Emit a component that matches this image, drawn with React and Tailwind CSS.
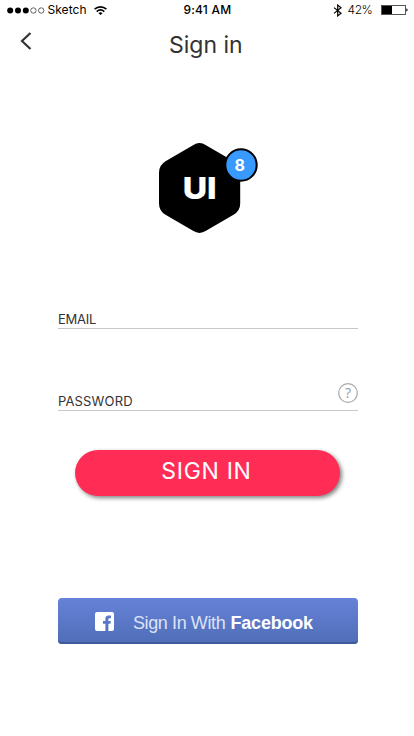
function StatusBar() {
  return (
    <header className="flex h-5 items-center text-[12px] leading-5 text-black">
      <svg className="ml-[7px] w-[38px] shrink-0" height="7" viewBox="0 0 38 7">
        <circle cx="3.2" cy="3.5" r="3" />
        <circle cx="11" cy="3.5" r="3" />
        <circle cx="18.8" cy="3.5" r="3" />
        <circle cx="26.4" cy="3.5" r="2.7" fill="none" stroke="#000" strokeWidth=".6" />
        <circle cx="34.2" cy="3.5" r="2.7" fill="none" stroke="#000" strokeWidth=".6" />
      </svg>
      <span className="ml-[2.5px] w-[40px] whitespace-nowrap tracking-[0.05px]">Sketch</span>
      <svg className="ml-[6px] shrink-0" width="13" height="9" viewBox="0 0 13 9" fill="none" stroke="#000" strokeWidth="1.6">
        <path d="M.6 3.2C4 .1 9 .1 12.400 3.200" />
        <path d="M2.700 5.600C5 3.600 8 3.600 10.300 5.600" />
        <path d="M4.500 7.200Q6.500 5.500 8.500 7.200L6.500 9Z" fill="#000" stroke="none" />
      </svg>
      <span className="ml-[77px] w-[50px] whitespace-nowrap font-medium tracking-[0.2px]">9:41 AM</span>
      <svg className="ml-[99px] shrink-0" width="10" height="13" viewBox="0 0 10 13" fill="none" stroke="#000" strokeWidth="1.2">
        <path d="M1 3.600 8 9.200 4.700 11.900V1.100L8 3.800 1 9.400" />
      </svg>
      <span className="ml-[5px] w-[26px] whitespace-nowrap font-[350] tracking-[-0.4px]">42%</span>
      <svg className="ml-[7px] shrink-0" width="28" height="10" viewBox="0 0 28 10">
        <rect x=".5" y=".5" width="24" height="9" fill="#fff" stroke="#444" strokeWidth=".9" />
        <rect x="1" y="1" width="10" height="8" />
        <path d="M25.300 3.300Q28 5 25.300 6.700Z" />
      </svg>
    </header>
  );
}

function Logo() {
  return (
    <svg className="ml-[158px] mt-[76px] block" width="100" height="92" viewBox="158 142 100 92">
      <path d="M193 145.200Q199.500 141 206 145.200L233.500 161.200Q240.200 165.200 240.200 172.500V203.500Q240.200 210.800 233.500 214.800L206 230.800Q199.500 235 193 230.800L165.500 214.800Q159 210.800 159 203.500V172.500Q159 165.200 165.500 161.200Z" />
      <circle cx="241" cy="165" r="15.700" fill="#3899ff" stroke="#000" strokeWidth="2" />
      <text x="182.700" y="199" fontFamily="Inter" fontWeight="840" fontSize="30.500" textLength="34" lengthAdjust="spacingAndGlyphs" fill="#fff" stroke="#fff" strokeWidth=".2">UI</text>
      <text x="239.700" y="170.600" textAnchor="middle" fontFamily="Inter" fontWeight="700" fontSize="16" fill="#fff">8</text>
    </svg>
  );
}

export default function App() {
  return (
    <main className="h-[736px] w-[414px] overflow-hidden bg-white font-['Inter',sans-serif] text-[#333]">
      <StatusBar />
      <div className="flex h-[46px] items-center">
        <svg className="ml-[20px] mb-[4px] shrink-0" width="12" height="18" viewBox="0 0 12 18" fill="none" stroke="#333" strokeWidth="2.200">
          <path d="M10.500 1 2 9l8.500 8" />
        </svg>
        <h1 className="ml-[137px] mt-[4px] whitespace-nowrap text-[23px] font-[370] leading-7">Sign in</h1>
      </div>
      <Logo />
      <form className="ml-[58px] w-[300px]">
        <div className="mt-[76px] h-[19px] border-b border-[#c8c8c8] text-[13px] leading-[18px] tracking-[-0.25px]">
          <label className="block">EMAIL</label>
        </div>
        <div className="mt-[50px] flex h-[32px] justify-between border-b border-[#c8c8c8]">
          <label className="mt-[13px] text-[13px] leading-[18px] tracking-[0.15px]">PASSWORD</label>
          <svg className="mt-[4px]" width="20" height="20" viewBox="0 0 20 20">
            <circle cx="10" cy="10" r="9.300" fill="none" stroke="#aaa" strokeWidth="1.200" />
            <text x="10" y="15" textAnchor="middle" fontFamily="Open Sans" fontSize="14" fill="#999">?</text>
          </svg>
        </div>
        <button type="button" className="ml-[17px] mt-[39px] block h-[46px] w-[265px] rounded-full bg-[#ff2d55] pb-[4px] pr-[2px] text-[23px] font-[370] leading-[42px] tracking-[0.7px] text-white shadow-[2px_2px_4px_rgba(0,0,0,0.5)]">SIGN IN</button>
      </form>
      <button type="button" className="ml-[58px] mt-[102px] flex h-[46px] w-[300px] items-center rounded-[4px] bg-linear-to-b from-[#6682d8] to-[#506db7] font-['Liberation_Sans',sans-serif] text-white shadow-[inset_0_-2px_0_#405b99]">
        <svg className="ml-[37px] shrink-0" width="19" height="19" viewBox="0 0 19 19">
          <path fill="#fff" d="M2 0H17Q19 0 19 2V17Q19 19 17 19H13.400V11.700H15.400L15.800 8.900H13.400V7.200Q13.400 6.200 14.300 6.200H16V3.600H13.500Q10.400 3.600 10.400 7V8.900H8V11.700H10.400V19H2Q0 19 0 17V2Q0 0 2 0Z" />
        </svg>
        <span className="ml-[19px] mt-[3px] flex whitespace-pre text-left text-[18px] leading-6"><span className="w-[97.5px] tracking-[-0.4px] text-[#dbe3f7]">Sign In With</span><strong className="tracking-[-0.2px]">Facebook</strong></span>
      </button>
    </main>
  );
}
